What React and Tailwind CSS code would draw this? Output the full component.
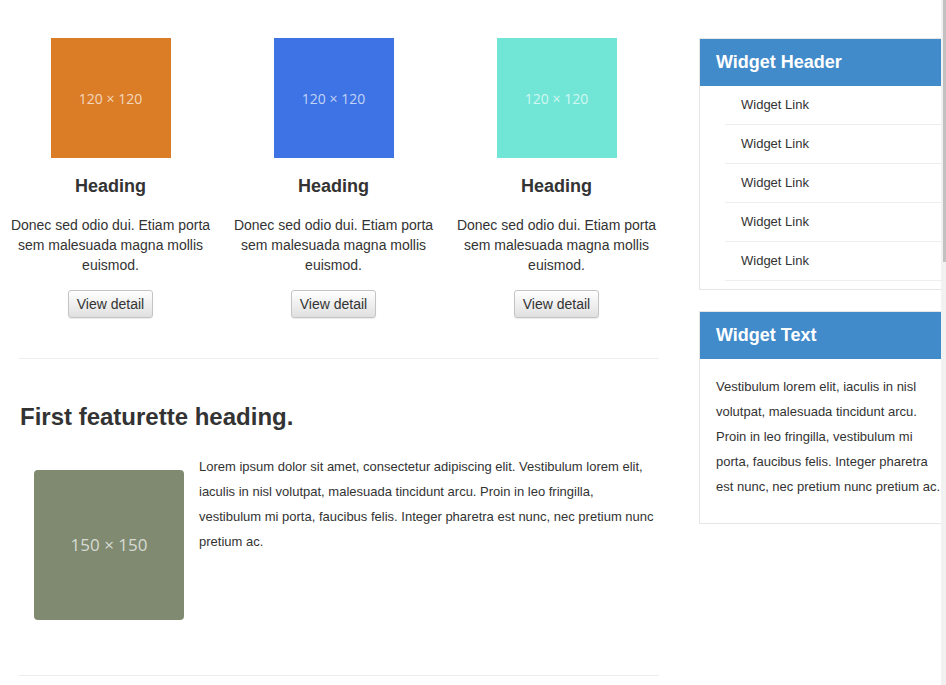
import React from "react";

const cols = [
  { color: "bg-[#db7d27]" },
  { color: "bg-[#3d73e4]" },
  { color: "bg-[#71e6d6]" },
];

export default function App() {
  return (
    <div className="flex w-[946px] h-[685px] overflow-hidden bg-white text-[#333]" style={{ fontFamily: '"Liberation Sans", Arial, sans-serif' }}>
      <div className="flex w-[941px] overflow-hidden">
        <div className="w-[669px] shrink-0 flex flex-col">
          <div className="flex pt-[38px] -ml-px">
            {cols.map((c, i) => (
              <div key={i} className="w-[223px] flex flex-col items-center text-center">
                <div className={`w-[120px] h-[120px] ${c.color} flex items-center justify-center text-[14px] text-white/70`} style={{ fontFamily: '"Open Sans", sans-serif' }}>
                  120 × 120
                </div>
                <h3 className="mt-[18px] text-[18px] leading-[20px] font-bold">Heading</h3>
                <p className="mt-[19px] text-[14px] leading-[20px] px-[6px]">
                  Donec sed odio dui. Etiam porta sem malesuada magna mollis euismod.
                </p>
                <button className="mt-[15px] h-[28px] px-[8px] text-[14px] text-[#333] border border-[#c4c4c4] rounded-[3px] bg-gradient-to-b from-white to-[#e0e0e0] shadow-[0_1px_1px_rgba(0,0,0,0.08)]">
                  View detail
                </button>
              </div>
            ))}
          </div>
          <div className="mt-[40px] ml-[19px] w-[640px] h-px bg-[#eee]" />
          <h2 className="mt-[45px] ml-[20px] text-[24px] leading-[26px] font-bold">First featurette heading.</h2>
          <div className="flex mt-[24px] ml-[34px] w-[625px]">
            <div className="mt-[16px] w-[150px] h-[150px] shrink-0 rounded-[4px] bg-[#7f8a71] flex items-center justify-center text-[17px] text-white/70" style={{ fontFamily: '"Open Sans", sans-serif' }}>
              150 × 150
            </div>
            <p className="ml-[15px] text-[13px] leading-[25px] pr-[2px]">
              Lorem ipsum dolor sit amet, consectetur adipiscing elit. Vestibulum lorem elit, iaculis in nisl volutpat, malesuada tincidunt arcu. Proin in leo fringilla, vestibulum mi porta, faucibus felis. Integer pharetra est nunc, nec pretium nunc pretium ac.
            </p>
          </div>
          <div className="mt-[55px] ml-[19px] w-[640px] h-px bg-[#eee]" />
        </div>
        <div className="ml-[30px] w-[250px] shrink-0 pt-[38px] flex flex-col">
          <div className="border border-[#e6e6e6] pb-[8px]">
            <div className="h-[47px] bg-[#428bca] text-white text-[18px] font-bold flex items-center pl-[16px]">Widget Header</div>
            <ul className="ml-[25px]">
              {[0, 1, 2, 3, 4].map((i) => (
                <li key={i} className="h-[39px] border-b border-[#eee] pl-[16px] flex items-center text-[13px]">
                  Widget Link
                </li>
              ))}
            </ul>
          </div>
          <div className="mt-[21px] border border-[#e6e6e6]">
            <div className="h-[47px] bg-[#428bca] text-white text-[18px] font-bold flex items-center pl-[16px]">Widget Text</div>
            <p className="pl-[16px] pr-[8px] pt-[15px] pb-[24px] text-[13px] leading-[25px]">
              Vestibulum lorem elit, iaculis in nisl volutpat, malesuada tincidunt arcu. Proin in leo fringilla, vestibulum mi porta, faucibus felis. Integer pharetra est nunc, nec pretium nunc pretium ac.
            </p>
          </div>
        </div>
      </div>
      <div className="w-[5px] shrink-0 bg-[#f1f1f1] flex">
        <div className="ml-[2px] w-[3px] h-[262px] bg-[#c1c1c1]" />
      </div>
    </div>
  );
}
